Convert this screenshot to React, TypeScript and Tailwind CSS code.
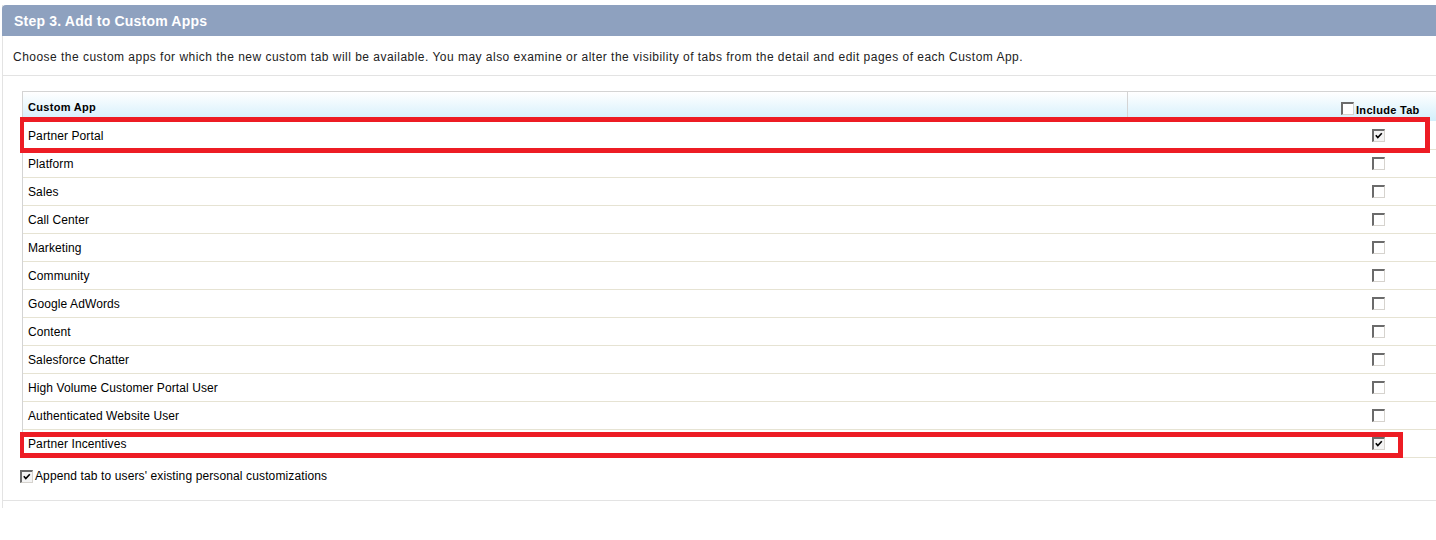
import React from 'react';

const apps = [
  { name: 'Partner Portal', checked: true },
  { name: 'Platform', checked: false },
  { name: 'Sales', checked: false },
  { name: 'Call Center', checked: false },
  { name: 'Marketing', checked: false },
  { name: 'Community', checked: false },
  { name: 'Google AdWords', checked: false },
  { name: 'Content', checked: false },
  { name: 'Salesforce Chatter', checked: false },
  { name: 'High Volume Customer Portal User', checked: false },
  { name: 'Authenticated Website User', checked: false },
  { name: 'Partner Incentives', checked: true },
];

function Checkbox({ checked }: { checked: boolean }) {
  return (
    <span
      className={`relative inline-block w-[13px] h-[13px] border-t-2 border-l-2 border-b border-r border-t-[#6b6b6b] border-l-[#6b6b6b] border-b-[#d6d3ce] border-r-[#d6d3ce] shrink-0 ${
        checked ? 'bg-[#f4f4f4]' : 'bg-white'
      }`}
    >
      {checked && (
        <svg viewBox="0 0 10 10" className="absolute left-[1px] top-[1px] w-[8px] h-[8px]">
          <path d="M1 4 L3.5 7 L8.5 1.5" stroke="#000" strokeWidth="2" fill="none" />
        </svg>
      )}
    </span>
  );
}

export default function App() {
  return (
    <div className="w-[1436px] h-[540px] overflow-hidden bg-white pt-[5px] pl-[2px] font-['Liberation_Sans',Arial,sans-serif] text-black">
      <div className="w-[1460px] border-l border-[#e3e3e3] pb-[7px]">
        {/* Step header */}
        <div className="h-[31px] bg-[#8ea1bf] rounded-tl-[4px] flex items-center pl-[12px] pt-[1px] -ml-px">
          <span className="text-white font-bold text-[14px] tracking-[0.2px]">Step 3. Add to Custom Apps</span>
        </div>

        <div className="h-[40px] border-b border-[#e3e3e3] flex items-center pl-[10px] pt-[3px]">
          <p className="text-[12px] tracking-[0.48px] text-[#222]">
            Choose the custom apps for which the new custom tab will be available. You may also examine or alter the visibility of tabs from the detail and edit pages of each Custom App.
          </p>
        </div>

        {/* Apps table */}
        <div className="relative mt-[15px] ml-[19px]">
          <div className="border-l border-t border-[#d4d4d4]">
            <div className="flex h-[30px] bg-gradient-to-b from-white to-[#d3effb] border-b border-white">
              <div className="w-[1105px] border-r border-[#d4d4d4] flex items-center pl-[5px] pt-[1px]">
                <span className="text-[11px] font-bold tracking-[0.3px]">Custom App</span>
              </div>
              <div className="flex-1 flex items-end pb-[6px] pl-[213px]">
                <Checkbox checked={false} />
                <span className="ml-[2px] text-[11px] font-bold tracking-[0.3px] leading-[11px] translate-y-[1px]">Include Tab</span>
              </div>
            </div>
            {apps.map((app) => (
              <div key={app.name} className="flex h-[28px] border-b border-[#e6e3d3]">
                <div className="w-[1106px] flex items-center pl-[5px]">
                  <span className="text-[12px] tracking-[0.1px]">{app.name}</span>
                </div>
                <div className="flex-1 flex items-center pl-[243px]">
                  <Checkbox checked={app.checked} />
                </div>
              </div>
            ))}
          </div>

          {/* Annotation boxes */}
          <div className="absolute left-[-2px] top-[26px] w-[1410px] h-[36px] border-[5px] border-l-4 border-[#ed1c24]" />
          <div className="absolute left-[-2px] top-[341px] w-[1383px] h-[26px] border-[5px] border-l-4 border-[#ed1c24]" />
        </div>

        <div className="flex items-start h-[43px] pl-[17px] pt-[12px] border-b border-[#e3e3e3]">
          <Checkbox checked={true} />
          <span className="ml-[2px] text-[12px] tracking-[0.12px] leading-[13px]">Append tab to users' existing personal customizations</span>
        </div>
      </div>
    </div>
  );
}
